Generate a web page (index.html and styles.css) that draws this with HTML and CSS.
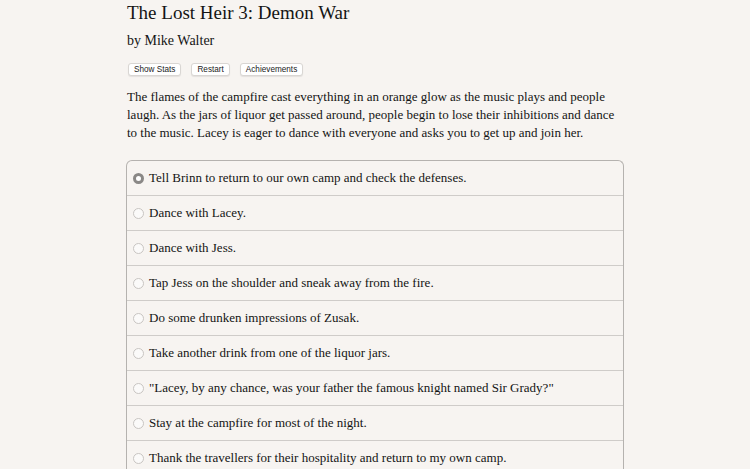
FILE: index.html
```html
<!DOCTYPE html>
<html>
<head>
<meta charset="utf-8">
<link rel="stylesheet" href="styles.css">
</head>
<body>
<div class="container">
  <h1 class="title">The Lost Heir 3: Demon War</h1>
  <h2 class="author">by Mike Walter</h2>
  <div class="buttons">
    <button class="btn">Show Stats</button>
    <button class="btn">Restart</button>
    <button class="btn">Achievements</button>
  </div>
  <p class="story">The flames of the campfire cast everything in an orange glow as the music plays and people laugh. As the jars of liquor get passed around, people begin to lose their inhibitions and dance to the music. Lacey is eager to dance with everyone and asks you to get up and join her.</p>
  <div class="choices">
    <div class="choice"><span class="radio checked"></span><span>Tell Brinn to return to our own camp and check the defenses.</span></div>
    <div class="choice"><span class="radio"></span><span>Dance with Lacey.</span></div>
    <div class="choice"><span class="radio"></span><span>Dance with Jess.</span></div>
    <div class="choice"><span class="radio"></span><span>Tap Jess on the shoulder and sneak away from the fire.</span></div>
    <div class="choice"><span class="radio"></span><span>Do some drunken impressions of Zusak.</span></div>
    <div class="choice"><span class="radio"></span><span>Take another drink from one of the liquor jars.</span></div>
    <div class="choice"><span class="radio"></span><span>"Lacey, by any chance, was your father the famous knight named Sir Grady?"</span></div>
    <div class="choice"><span class="radio"></span><span>Stay at the campfire for most of the night.</span></div>
    <div class="choice"><span class="radio"></span><span>Thank the travellers for their hospitality and return to my own camp.</span></div>
  </div>
</div>
</body>
</html>
```

FILE: styles.css
```css
html, body {
  margin: 0;
  padding: 0;
  background: #f7f4f1;
}
body {
  font-family: "Liberation Serif", serif;
  color: #141414;
}
.container {
  width: 498px;
  margin: 0 auto;
  padding-top: 1px;
}
.title {
  font-weight: normal;
  font-size: 19px;
  line-height: 24px;
  margin: 0 0 0 1px;
}
.author {
  font-weight: normal;
  font-size: 14px;
  line-height: 20px;
  margin: 6px 0 0 1px;
}
.buttons {
  display: flex;
  gap: 10px;
  margin: 12px 0 0 2px;
}
.btn {
  font-family: "Liberation Sans", sans-serif;
  font-size: 8.2px;
  line-height: 11px;
  padding: 0 5px;
  background: #fff;
  border: 1px solid #d9d6d3;
  border-radius: 3px;
  box-shadow: 0 1px 1px rgba(0,0,0,0.08);
  color: #222;
}
.story {
  font-size: 13px;
  line-height: 18px;
  margin: 12px 0 0 1px;
}
.choices {
  margin-top: 18px;
  border: 1px solid #b5b2af;
  border-bottom: none;
  border-radius: 6px 6px 0 0;
}
.choice {
  height: 34px;
  display: flex;
  align-items: center;
  font-size: 13px;
  border-top: 1px solid #cfccc9;
  padding-bottom: 1px;
  box-sizing: border-box;
}
.choice:first-child {
  border-top: none;
}
.choice + .choice {
  height: 35px;
}
.radio {
  width: 9px;
  height: 9px;
  border: 1px solid #c8c5c2;
  border-radius: 50%;
  background: #fbfaf9;
  margin: 1px 5px 0 6px;
  flex: none;
  box-sizing: content-box;
}
.radio.checked {
  background: #fff;
  border: 3px solid #8a8886;
  width: 5px;
  height: 5px;
}
```
